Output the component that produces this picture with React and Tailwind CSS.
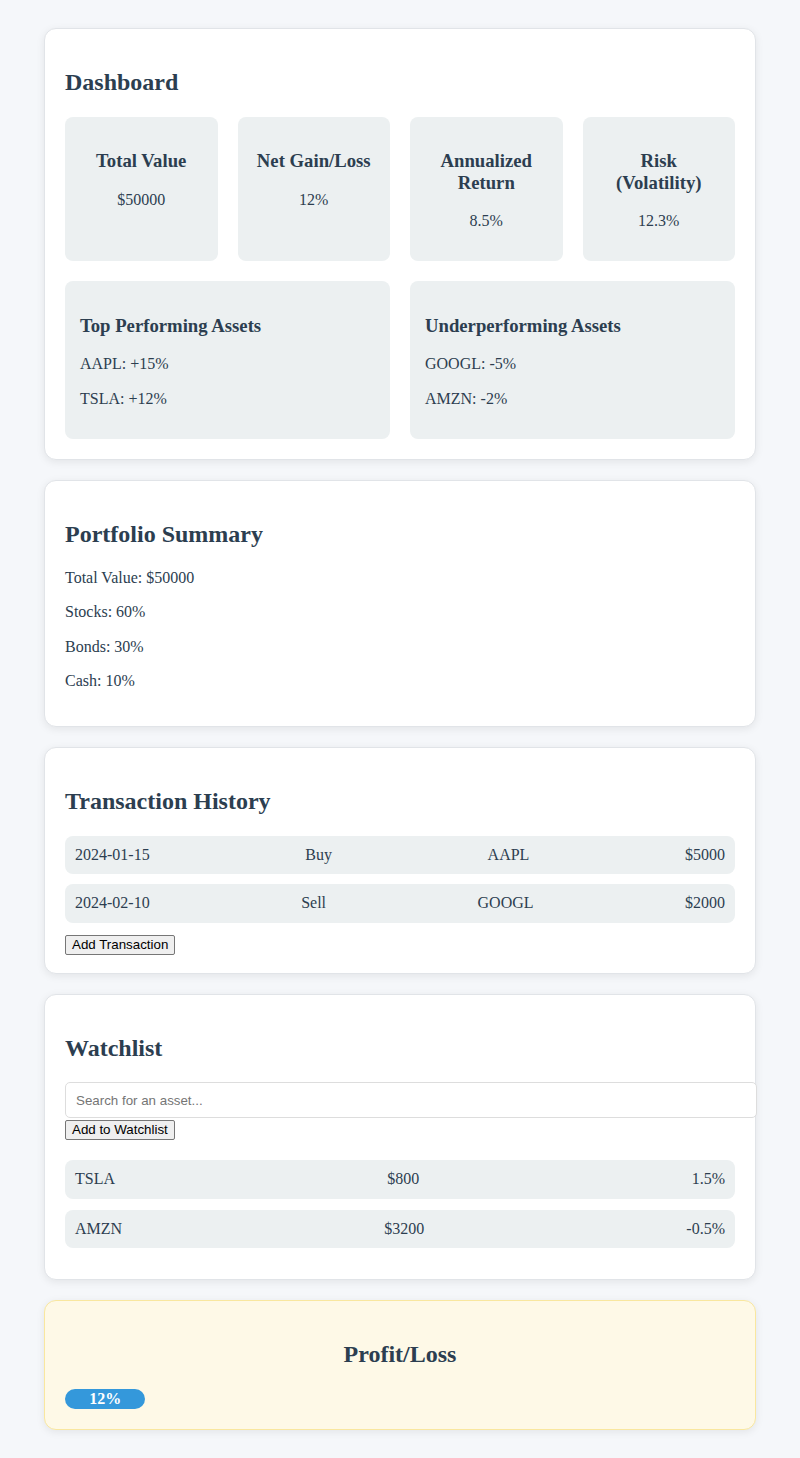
import { useState } from 'react';

const stats = [
  { label: 'Total Value', value: '$50000' },
  { label: 'Net Gain/Loss', value: '12%' },
  { label: 'Annualized Return', value: '8.5%' },
  { label: 'Risk (Volatility)', value: '12.3%' },
];

const transactions = [
  { date: '2024-01-15', type: 'Buy', asset: 'AAPL', amount: '$5000' },
  { date: '2024-02-10', type: 'Sell', asset: 'GOOGL', amount: '$2000' },
];

const watchlist = [
  { symbol: 'TSLA', price: '$800', change: '1.5%' },
  { symbol: 'AMZN', price: '$3200', change: '-0.5%' },
];

function Card({ children, className = '' }) {
  return (
    <section className={`rounded-[12px] border p-5 shadow-[0_2px_8px_rgba(0,0,0,0.08)] ${className || 'bg-white border-[#e1e4e8]'}`}>
      {children}
    </section>
  );
}

function Title({ children, center }) {
  return (
    <h2 className={`my-5 text-[24px] leading-[27.6px] font-bold ${center ? 'text-center' : ''}`}>{children}</h2>
  );
}

function SysButton({ children }) {
  return (
    <button className="font-['Liberation_Sans',Arial,sans-serif] text-[13.33px] leading-[16px] text-black bg-[#efefef] border border-[#767676] rounded-[2px] px-[6px] py-[1px]">
      {children}
    </button>
  );
}

export default function App() {
  const [query, setQuery] = useState('');

  return (
    <div className="min-h-screen bg-[#f5f7fa] px-[44px] pt-[28px] pb-[30px] font-['Liberation_Serif','Times_New_Roman',serif] text-[#2c3e50]">
      <div className="flex flex-col gap-5">
        {/* Dashboard */}
        <Card>
          <Title>Dashboard</Title>
          <div className="grid grid-cols-4 gap-5">
            {stats.map(s => (
              <div key={s.label} className="bg-[#ecf0f1] rounded-[8px] p-[15px] text-center">
                <h3 className="my-[18.72px] text-[18.72px] leading-[21.5px] font-bold">{s.label}</h3>
                <p className="my-4 text-[16px] leading-[18.4px]">{s.value}</p>
              </div>
            ))}
            <div className="col-span-2 bg-[#ecf0f1] rounded-[8px] p-[15px]">
              <h3 className="my-[18.72px] text-[18.72px] leading-[21.5px] font-bold">Top Performing Assets</h3>
              <p className="my-4 text-[16px] leading-[18.4px]">AAPL: +15%</p>
              <p className="my-4 text-[16px] leading-[18.4px]">TSLA: +12%</p>
            </div>
            <div className="col-span-2 bg-[#ecf0f1] rounded-[8px] p-[15px]">
              <h3 className="my-[18.72px] text-[18.72px] leading-[21.5px] font-bold">Underperforming Assets</h3>
              <p className="my-4 text-[16px] leading-[18.4px]">GOOGL: -5%</p>
              <p className="my-4 text-[16px] leading-[18.4px]">AMZN: -2%</p>
            </div>
          </div>
        </Card>

        {/* Portfolio summary */}
        <Card>
          <Title>Portfolio Summary</Title>
          <div className="flex flex-col gap-4 text-[16px] leading-[18.4px] pb-[16px]">
            <p>Total Value: $50000</p>
            <p>Stocks: 60%</p>
            <p>Bonds: 30%</p>
            <p>Cash: 10%</p>
          </div>
        </Card>

        {/* Transactions */}
        <Card>
          <Title>Transaction History</Title>
          {transactions.map(t => (
            <div key={t.date} className="mb-[10px] flex justify-between rounded-[8px] bg-[#ecf0f1] p-[10px] text-[16px] leading-[18.4px]">
              <span>{t.date}</span>
              <span>{t.type}</span>
              <span>{t.asset}</span>
              <span>{t.amount}</span>
            </div>
          ))}
          <div className="h-[20px] pt-[2px] flex items-start">
            <SysButton>Add Transaction</SysButton>
          </div>
        </Card>

        {/* Watchlist */}
        <Card>
          <Title>Watchlist</Title>
          <div className="w-[692px]">
            <input
              type="text"
              value={query}
              onChange={e => setQuery(e.target.value)}
              placeholder="Search for an asset..."
              className="block w-full h-[36px] rounded-[5px] border border-[#dddddd] bg-white px-[10px] font-['Liberation_Sans',Arial,sans-serif] text-[13.33px] text-black placeholder:text-[#757575] outline-none"
            />
          </div>
          <div className="h-[22px] pt-[2px] flex items-start">
            <SysButton>Add to Watchlist</SysButton>
          </div>
          <div className="mt-[20px]">
            {watchlist.map(w => (
              <div key={w.symbol} className="mb-[11px] flex justify-between rounded-[8px] bg-[#ecf0f1] p-[10px] text-[16px] leading-[18.4px]">
                <span>{w.symbol}</span>
                <span>{w.price}</span>
                <span>{w.change}</span>
              </div>
            ))}
          </div>
        </Card>

        {/* Profit / Loss */}
        <Card className="bg-[#fef9e7] border-[#f9e79f]">
          <Title center>Profit/Loss</Title>
          <div className="w-full h-[20px]">
            <div className="h-[20px] rounded-full bg-[#3498db] text-center text-white font-bold text-[16px] leading-[20px]" style={{ width: '12%' }}>
              12%
            </div>
          </div>
        </Card>
      </div>
    </div>
  );
}
